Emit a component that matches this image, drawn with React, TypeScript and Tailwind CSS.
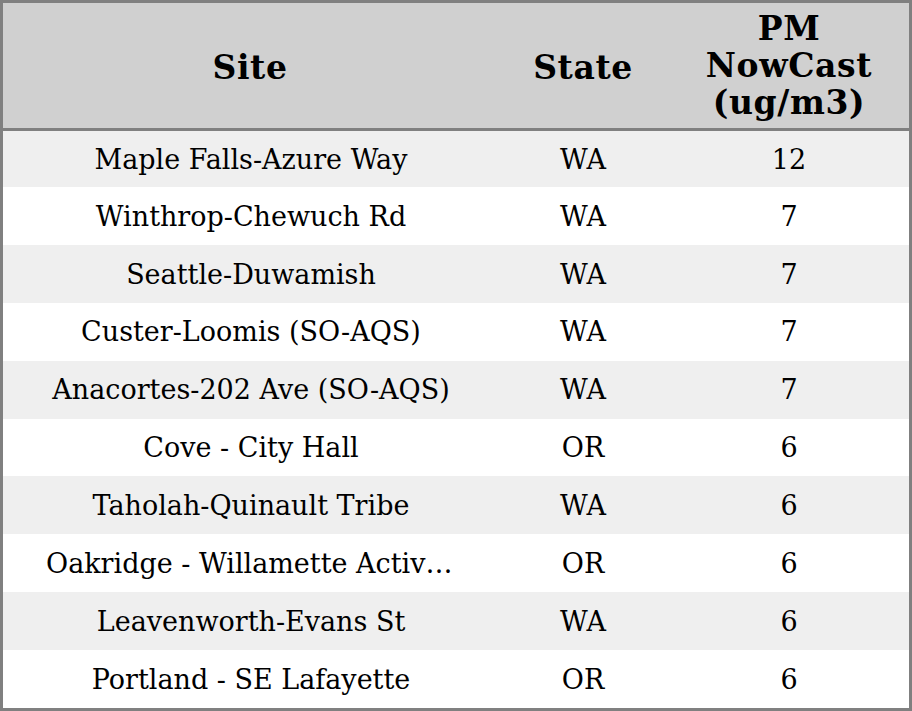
const rows = [
  { site: "Maple Falls-Azure Way", state: "WA", pm: 12 },
  { site: "Winthrop-Chewuch Rd", state: "WA", pm: 7 },
  { site: "Seattle-Duwamish", state: "WA", pm: 7 },
  { site: "Custer-Loomis (SO-AQS)", state: "WA", pm: 7 },
  { site: "Anacortes-202 Ave (SO-AQS)", state: "WA", pm: 7 },
  { site: "Cove - City Hall", state: "OR", pm: 6 },
  { site: "Taholah-Quinault Tribe", state: "WA", pm: 6 },
  { site: "Oakridge - Willamette Activity Center", state: "OR", pm: 6 },
  { site: "Leavenworth-Evans St", state: "WA", pm: 6 },
  { site: "Portland - SE Lafayette", state: "OR", pm: 6 },
];

export default function App() {
  return (
    <div className="flex h-[711px] w-[912px] flex-col overflow-hidden border-[3px] border-[#808080] bg-white font-['DejaVu_Serif',serif] text-black">
      <div className="grid h-[128px] shrink-0 grid-cols-[494px_172px_1fr] items-center border-b-[3px] border-[#808080] bg-[#d0d0d0] text-center text-[33px] leading-[37px] font-bold tracking-[0.6px]">
        <div className="pt-[3px]">Site</div>
        <div className="pt-[3px]">State</div>
        <div>
          PM
          <br />
          NowCast
          <br />
          (ug/m3)
        </div>
      </div>
      {rows.map((r, i) => (
        <div
          key={r.site}
          className={`grid grid-cols-[494px_172px_1fr] items-center text-center text-[27px] ${i === 0 ? "h-[56px] shrink-0" : "flex-1"} ${i % 2 === 0 ? "bg-[#efefef]" : "bg-white"}`}
        >
          <div className="truncate pt-[2px] pr-[41px] pl-[43px]">{r.site}</div>
          <div className="pt-[2px]">{r.state}</div>
          <div className="pt-[2px]">{r.pm}</div>
        </div>
      ))}
    </div>
  );
}
